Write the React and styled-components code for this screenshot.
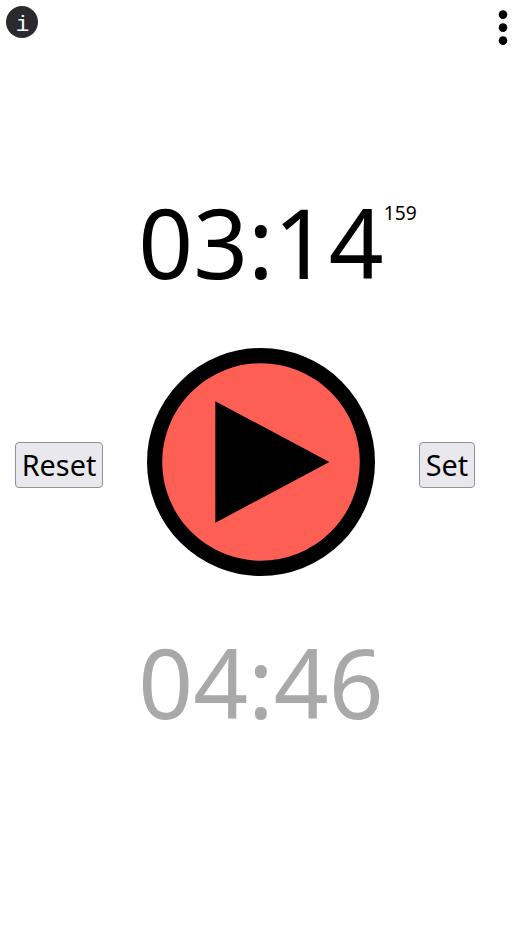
import React from "react";
import styled, { createGlobalStyle } from "styled-components";

const GlobalStyle = createGlobalStyle`
  * { box-sizing: border-box; }
  body { margin: 0; background: #fff; color: #000; font-family: "Noto Sans", sans-serif; }
`;

const Page = styled.main`
  height: 928px;
  display: flex;
  flex-direction: column;
  overflow: hidden;
`;

const Header = styled.header`
  height: 186px;
  flex: none;
  display: flex;
  justify-content: space-between;
  align-items: flex-start;
  padding: 6px 13px 0 6px;
`;

const Info = styled.button`
  width: 32px;
  height: 32px;
  padding: 6px 0 0 1px;
  border: 0;
  border-radius: 50%;
  background: #2a2a2e;
  color: #fbfbfe;
  font: 22.5px/26px "Liberation Mono", monospace;
`;

const Menu = styled.button`
  width: 12px;
  height: 44px;
  padding: 0;
  border: 0;
  background: none;
  svg { display: block; }
`;

const Time = styled.div`
  height: ${(p) => p.$height}px;
  margin-top: ${(p) => p.$gap || 0}px;
  flex: none;
  display: grid;
  grid-template-columns: 1fr auto 1fr;
  font-size: 96px;
  line-height: 112px;
  color: ${(p) => p.$color};
`;

const Digits = styled.span`
  grid-column: 2;
`;

const Millis = styled.span`
  font-size: 19.2px;
  line-height: 26px;
  padding-top: 14px;
`;

const Controls = styled.section`
  height: 228px;
  flex: none;
  display: grid;
  grid-template-columns: 147px 228px 147px;
  align-items: center;
`;

const Action = styled.button`
  justify-self: start;
  margin-left: ${(p) => p.$indent}px;
  margin-top: 6px;
  width: ${(p) => p.$width}px;
  height: 46px;
  padding: 0;
  border: 1px solid #8f8f9d;
  border-radius: 4px;
  background: #e9e9ed;
  color: #000;
  font: 28.8px/44px "Noto Sans", sans-serif;
`;

const Play = styled.button`
  width: 228px;
  height: 228px;
  padding: 0;
  border: 0;
  background: none;
  svg { display: block; }
`;

export default function App() {
  return (
    <Page>
      <GlobalStyle />
      <Header>
        <Info>i</Info>
        <Menu aria-label="Menu">
          <svg width="12" height="44" viewBox="0 0 12 44">
            <circle cx="6" cy="8.6" r="4.3" />
            <circle cx="6" cy="21.6" r="4.3" />
            <circle cx="6" cy="34.6" r="4.3" />
          </svg>
        </Menu>
      </Header>
      <Time $height={162} $color="#000">
        <Digits>03:14</Digits>
        <Millis>159</Millis>
      </Time>
      <Controls>
        <Action $indent={15} $width={88}>Reset</Action>
        <Play aria-label="Start">
          <svg width="228" height="228" viewBox="0 0 228 228">
            <circle cx="114" cy="114" r="106.4" fill="#fe5f55" stroke="#000" strokeWidth="15.2" />
            <path d="M68.3 53.2 182.4 114 68.3 174.8Z" />
          </svg>
        </Play>
        <Action $indent={44} $width={56}>Set</Action>
      </Controls>
      <Time $height={112} $gap={50} $color="#a9a9a9">
        <Digits>04:46</Digits>
      </Time>
    </Page>
  );
}
